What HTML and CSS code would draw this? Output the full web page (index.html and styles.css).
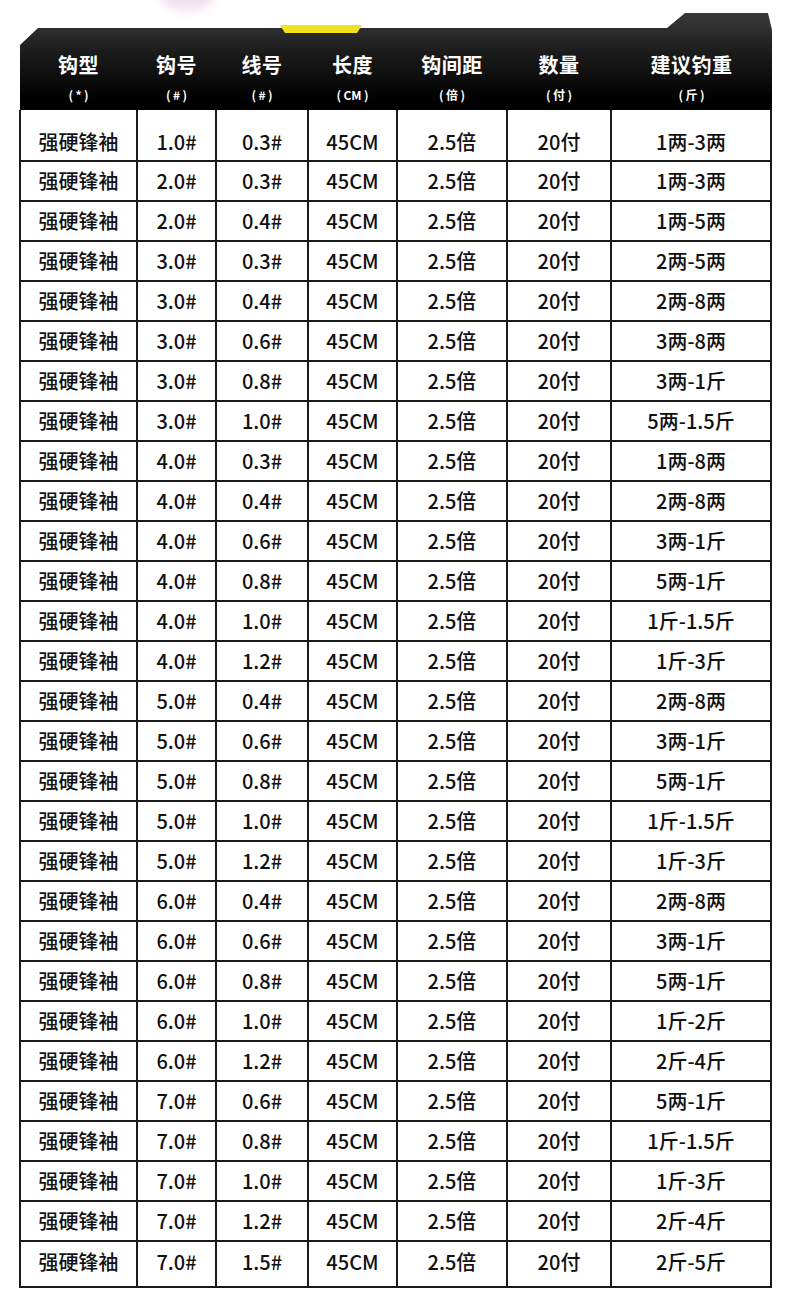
FILE: index.html
```html
<!DOCTYPE html>
<html lang="zh-CN">
<head>
<meta charset="utf-8">
<title>强硬锋袖 规格表</title>
<link rel="stylesheet" href="styles.css">
</head>
<body>
<div class="page">
  <div class="blob"></div>
  <div class="head-wrap">
    <div class="head">
      <div class="hc"><span class="ht">钩型</span><span class="hs">(&thinsp;*&thinsp;)</span></div>
      <div class="hc"><span class="ht">钩号</span><span class="hs">(&thinsp;#&thinsp;)</span></div>
      <div class="hc"><span class="ht">线号</span><span class="hs">(&thinsp;#&thinsp;)</span></div>
      <div class="hc"><span class="ht">长度</span><span class="hs">(&thinsp;CM&thinsp;)</span></div>
      <div class="hc"><span class="ht">钩间距</span><span class="hs">(&thinsp;倍&thinsp;)</span></div>
      <div class="hc"><span class="ht">数量</span><span class="hs">(&thinsp;付&thinsp;)</span></div>
      <div class="hc"><span class="ht">建议钓重</span><span class="hs">(&thinsp;斤&thinsp;)</span></div>
    </div>
    <div class="tab"></div>
  </div>
  <table class="spec">
    <colgroup>
      <col class="c1"><col class="c2"><col class="c3"><col class="c4"><col class="c5"><col class="c6"><col class="c7">
    </colgroup>
    <tbody>
      <tr><td>强硬锋袖</td><td>1.0#</td><td>0.3#</td><td>45CM</td><td>2.5倍</td><td>20付</td><td>1两-3两</td></tr>
      <tr><td>强硬锋袖</td><td>2.0#</td><td>0.3#</td><td>45CM</td><td>2.5倍</td><td>20付</td><td>1两-3两</td></tr>
      <tr><td>强硬锋袖</td><td>2.0#</td><td>0.4#</td><td>45CM</td><td>2.5倍</td><td>20付</td><td>1两-5两</td></tr>
      <tr><td>强硬锋袖</td><td>3.0#</td><td>0.3#</td><td>45CM</td><td>2.5倍</td><td>20付</td><td>2两-5两</td></tr>
      <tr><td>强硬锋袖</td><td>3.0#</td><td>0.4#</td><td>45CM</td><td>2.5倍</td><td>20付</td><td>2两-8两</td></tr>
      <tr><td>强硬锋袖</td><td>3.0#</td><td>0.6#</td><td>45CM</td><td>2.5倍</td><td>20付</td><td>3两-8两</td></tr>
      <tr><td>强硬锋袖</td><td>3.0#</td><td>0.8#</td><td>45CM</td><td>2.5倍</td><td>20付</td><td>3两-1斤</td></tr>
      <tr><td>强硬锋袖</td><td>3.0#</td><td>1.0#</td><td>45CM</td><td>2.5倍</td><td>20付</td><td>5两-1.5斤</td></tr>
      <tr><td>强硬锋袖</td><td>4.0#</td><td>0.3#</td><td>45CM</td><td>2.5倍</td><td>20付</td><td>1两-8两</td></tr>
      <tr><td>强硬锋袖</td><td>4.0#</td><td>0.4#</td><td>45CM</td><td>2.5倍</td><td>20付</td><td>2两-8两</td></tr>
      <tr><td>强硬锋袖</td><td>4.0#</td><td>0.6#</td><td>45CM</td><td>2.5倍</td><td>20付</td><td>3两-1斤</td></tr>
      <tr><td>强硬锋袖</td><td>4.0#</td><td>0.8#</td><td>45CM</td><td>2.5倍</td><td>20付</td><td>5两-1斤</td></tr>
      <tr><td>强硬锋袖</td><td>4.0#</td><td>1.0#</td><td>45CM</td><td>2.5倍</td><td>20付</td><td>1斤-1.5斤</td></tr>
      <tr><td>强硬锋袖</td><td>4.0#</td><td>1.2#</td><td>45CM</td><td>2.5倍</td><td>20付</td><td>1斤-3斤</td></tr>
      <tr><td>强硬锋袖</td><td>5.0#</td><td>0.4#</td><td>45CM</td><td>2.5倍</td><td>20付</td><td>2两-8两</td></tr>
      <tr><td>强硬锋袖</td><td>5.0#</td><td>0.6#</td><td>45CM</td><td>2.5倍</td><td>20付</td><td>3两-1斤</td></tr>
      <tr><td>强硬锋袖</td><td>5.0#</td><td>0.8#</td><td>45CM</td><td>2.5倍</td><td>20付</td><td>5两-1斤</td></tr>
      <tr><td>强硬锋袖</td><td>5.0#</td><td>1.0#</td><td>45CM</td><td>2.5倍</td><td>20付</td><td>1斤-1.5斤</td></tr>
      <tr><td>强硬锋袖</td><td>5.0#</td><td>1.2#</td><td>45CM</td><td>2.5倍</td><td>20付</td><td>1斤-3斤</td></tr>
      <tr><td>强硬锋袖</td><td>6.0#</td><td>0.4#</td><td>45CM</td><td>2.5倍</td><td>20付</td><td>2两-8两</td></tr>
      <tr><td>强硬锋袖</td><td>6.0#</td><td>0.6#</td><td>45CM</td><td>2.5倍</td><td>20付</td><td>3两-1斤</td></tr>
      <tr><td>强硬锋袖</td><td>6.0#</td><td>0.8#</td><td>45CM</td><td>2.5倍</td><td>20付</td><td>5两-1斤</td></tr>
      <tr><td>强硬锋袖</td><td>6.0#</td><td>1.0#</td><td>45CM</td><td>2.5倍</td><td>20付</td><td>1斤-2斤</td></tr>
      <tr><td>强硬锋袖</td><td>6.0#</td><td>1.2#</td><td>45CM</td><td>2.5倍</td><td>20付</td><td>2斤-4斤</td></tr>
      <tr><td>强硬锋袖</td><td>7.0#</td><td>0.6#</td><td>45CM</td><td>2.5倍</td><td>20付</td><td>5两-1斤</td></tr>
      <tr><td>强硬锋袖</td><td>7.0#</td><td>0.8#</td><td>45CM</td><td>2.5倍</td><td>20付</td><td>1斤-1.5斤</td></tr>
      <tr><td>强硬锋袖</td><td>7.0#</td><td>1.0#</td><td>45CM</td><td>2.5倍</td><td>20付</td><td>1斤-3斤</td></tr>
      <tr><td>强硬锋袖</td><td>7.0#</td><td>1.2#</td><td>45CM</td><td>2.5倍</td><td>20付</td><td>2斤-4斤</td></tr>
      <tr><td>强硬锋袖</td><td>7.0#</td><td>1.5#</td><td>45CM</td><td>2.5倍</td><td>20付</td><td>2斤-5斤</td></tr>
    </tbody>
  </table>
</div>
</body>
</html>
```

FILE: styles.css
```css
html, body {
  margin: 0;
  padding: 0;
  background: #fff;
}
body {
  font-family: "Noto Sans CJK SC", "Noto Sans", sans-serif;
  color: #111;
}
.page {
  position: relative;
  width: 790px;
  height: 1310px;
  padding-top: 13px;
  box-sizing: border-box;
  overflow: hidden;
}
.blob {
  position: absolute;
  left: 160px;
  top: -14px;
  width: 54px;
  height: 24px;
  border-radius: 50%;
  background: #f1dff0;
  filter: blur(5px);
}
.head-wrap {
  position: relative;
  margin-left: 20px;
  width: 752px;
  height: 97px;
}
.head {
  display: grid;
  grid-template-columns: 117px 79px 92px 89px 110px 104px 161px;
  height: 97px;
  background: linear-gradient(#3a3a3a 0%, #1c1c1c 40%, #000 90%);
  clip-path: polygon(0 32px, 18px 15px, 647px 15px, 665px 0, 748px 0, 752px 17px, 752px 97px, 0 97px);
  color: #fff;
}
.hc {
  display: flex;
  flex-direction: column;
  align-items: center;
  padding-top: 39px;
}
.ht {
  font-size: 20px;
  font-weight: 700;
  line-height: 26px;
  letter-spacing: 0.5px;
}
.hs {
  font-size: 12px;
  font-weight: 700;
  line-height: 14px;
  margin-top: 10px;
}
.tab {
  position: absolute;
  left: 260px;
  top: 12px;
  width: 82px;
  height: 8px;
  background: #f2e21c;
  clip-path: polygon(0 0, 100% 0, 94% 100%, 6% 100%);
}
.spec {
  margin-left: 19px;
  width: 753px;
  border-collapse: collapse;
  table-layout: fixed;
}
.c1 { width: 117px; }
.c2 { width: 79px; }
.c3 { width: 92px; }
.c4 { width: 89px; }
.c5 { width: 110px; }
.c6 { width: 104px; }
.c7 { width: 160px; }
.spec td {
  border: 2px solid #1a1a1a;
  height: 40px;
  padding: 0;
  box-sizing: border-box;
  text-align: center;
  vertical-align: middle;
  font-size: 20px;
  font-weight: 500;
  line-height: 26px;
}
.spec tr:first-child td {
  border-top: 0;
  height: 51px;
  padding-top: 14px;
}
.spec tr:last-child td {
  height: 46px;
  padding-bottom: 4px;
}
```
